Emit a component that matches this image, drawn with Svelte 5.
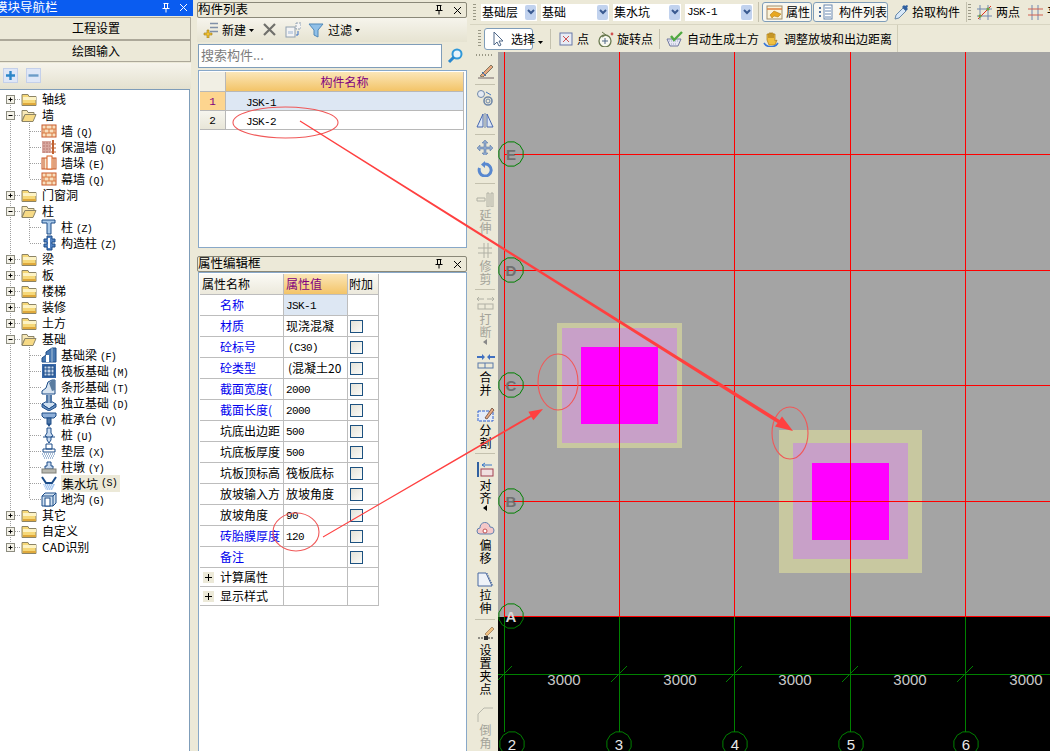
<script>
  const wallI = '<rect x="1" y="2" width="14" height="12" fill="#f8e0c0" stroke="#c8582a"/><path d="M1 6h14M1 10h14M5 2v4M11 2v4M3 6v4M8 6v4M13 6v4M5 10v4M11 10v4" stroke="#d87840" fill="none"/>';
  const icons = {
    closed: '<path d="M1 3.5h6l1 2h7v9H1z" fill="#f6d878" stroke="#8c8466"/><rect x="2" y="6" width="13" height="3" fill="#fdf3c4"/><rect x="2" y="12" width="13" height="2" fill="#dfa93c"/>',
    open: '<path d="M1 3.5h5l1 2h6v2H4L1 14z" fill="#f8e9b8" stroke="#8c8466"/><path d="M4 7.5h11l-3 7H1z" fill="#f7da85" stroke="#8c8466"/>',
    wall: wallI,
    insul: '<rect x="1" y="2" width="9" height="12" fill="#d8a8a0"/><path d="M2 4h7M2 7h7M2 10h7M2 13h7" stroke="#b87870" stroke-dasharray="2 1"/><rect x="11" y="1" width="2" height="14" fill="#c06030"/><path d="M10 5h5M10 9h5M10 13h5" stroke="#c06030"/>',
    pier: '<rect x="1" y="3" width="14" height="11" fill="#f8e8d0" stroke="#c8582a"/><rect x="6" y="1" width="5" height="13" fill="#fff" stroke="#d86020"/><path d="M3 3v11M13 3v11" stroke="#c8582a"/>',
    col: '<path d="M1 1h13v3h-4v11H6V4H1z" fill="#a8c8e8" stroke="#1c4c88"/>',
    ccol: '<path d="M6 1h5v3h3v3h-3v2h3v3h-3v3H6v-3H3V9h3V7H3V4h3z" fill="#5080c0" stroke="#1c4c88"/><rect x="7" y="3" width="2" height="10" fill="#fff"/>',
    fbeam: '<path d="M1 15v-4l4-3V5l6-4h4v14z" fill="#4878b0" stroke="#1c4c88"/><path d="M5 15V8h3v7z" fill="#fff"/><path d="M11 1v14" stroke="#a8c0d8"/>',
    raft: '<rect x="1" y="1" width="14" height="14" fill="#3868a8"/><path d="M3 3h10v10H3zM6 3v10M10 3v10M3 6h10M3 10h10" fill="#c8d8ec" stroke="#1c4c88"/>',
    strip: '<path d="M1 15v-3l4-3 2-6 4-2h3v14z" fill="#d8e4f0" stroke="#1c4c88"/><path d="M8 4l3-3h3v10l-3 1z" fill="#5a7ca0"/>',
    iso: '<path d="M1 9l7-4 7 4-7 5z" fill="#d0e0f0" stroke="#1c4c88"/><path d="M1 9v3l7 4 7-4V9l-7 5z" fill="#6890c0" stroke="#1c4c88"/><rect x="5" y="0" width="6" height="8" fill="#5078a8"/><path d="M8 0v8" stroke="#c8d8e8"/>',
    cap: '<path d="M1 2h14v3l-2 2H3L1 5z" fill="#90b0d8" stroke="#1c4c88"/><rect x="6" y="7" width="4" height="6" fill="#5078a8" stroke="#1c4c88"/><path d="M6 13l2 3 2-3z" fill="#1c4c88"/>',
    pile: '<path d="M6 1h4v5l2 3-2 1 0 3-2 3-2-3v-3L4 9l2-3z" fill="#c8daf0" stroke="#1c4c88"/><path d="M2 10h12" stroke="#1c4c88"/>',
    pad: '<path d="M5 1h6v5H5zM2 6h12v3H2z" fill="#fff" stroke="#1c4c88"/><path d="M1 11h14M2 13h12M3 15h10" stroke="#4878b0" stroke-dasharray="1 1"/>',
    pier2: '<path d="M6 3h4v4h2v3H4V7h2z" fill="#c8daf0" stroke="#1c4c88"/><rect x="1" y="10" width="14" height="4" fill="#b8b8b0" stroke="#808078"/>',
    pit: '<path d="M1 2l4 6h6l4-6" fill="none" stroke="#1c4c88" stroke-width="2"/><path d="M2 9h12l-3 6H5z" fill="#a8c8f0"/><path d="M3 10h10M4 12h8M5 14h6" stroke="#fff" stroke-dasharray="1 1"/>',
    trench: '<path d="M1 5l3-3h11v10l-3 3H1z" fill="#d0e0f0" stroke="#1c4c88"/><path d="M1 5h11v10M12 5l3-3" fill="none" stroke="#1c4c88"/><rect x="4" y="7" width="5" height="8" fill="#fff" stroke="#1c4c88"/>',
    newb: '<path d="M2 11h3V8h2v3h3v2H7v3H5v-3H2z" fill="#f0c030" stroke="#a07818" stroke-width=".6"/><path d="M8 1.5h8M8 5.5h8M8 9.5h8" stroke="#8090a8" stroke-width="1.6"/>',
    del: '<path d="M2 2l11 11M13 2L2 13" stroke="#70706c" stroke-width="2.2"/>',
    copy: '<rect x="1" y="5" width="9" height="10" fill="#f4f4f4" stroke="#90a0b0"/><rect x="3" y="9" width="5" height="3" fill="#c8d4e4"/><rect x="11" y="1" width="5" height="6" fill="#f4f4f4" stroke="#90a0b0" stroke-dasharray="2 1"/><path d="M13 9v4h-2" stroke="#3870c8" fill="none"/>',
    funnel: '<path d="M1 2h14l-5 6v7l-4-2V8z" fill="#90c0e8" stroke="#5088b8"/>',
    search: '<circle cx="10" cy="6" r="4.5" fill="#e8f4fc" stroke="#3098d8" stroke-width="2"/><path d="M7 9l-5 5" stroke="#2888d0" stroke-width="3"/>',
    prop: '<rect x="1" y="2" width="15" height="13" fill="#fbf3d8" stroke="#a09070"/><path d="M1 5h15" stroke="#e08040" stroke-width="1.5"/><path d="M4 11l4-4 7 3-3 3-4-1-2 2z" fill="#e8a820" stroke="#a87010" stroke-width=".5"/>',
    list: '<path d="M2 3h2v2H2zM2 7h2v2H2zM2 11h2v2H2z" fill="#5070a0"/><rect x="7" y="1" width="8" height="14" fill="#fff" stroke="#6888b0"/><path d="M8 4h6M8 7h6M8 10h6M8 13h6" stroke="#6888b0"/>',
    pick: '<path d="M2 15l1-4 7-7 3 3-7 7z" fill="#d8e8f8" stroke="#6888a8"/><path d="M9 3l2-2 1 1 2-1 1 1-1 2 1 1-2 2z" fill="#3060a0"/>',
    two: '<path d="M4 1v15M12 1v15M1 5h15M1 12h15" stroke="#7088b0"/><path d="M2 15L15 2" stroke="#e03020"/><circle cx="4" cy="12" r="1.6" fill="#70a040"/><circle cx="12" cy="5" r="1.6" fill="#70a040"/>',
    grid: '<path d="M5 1v15M11 1v15" stroke="#7088b0"/><path d="M1 5h15M1 11h15" stroke="#d06050"/>',
    arrowc: '<path d="M4 1v13l3-3 2 4 2-1-2-4h4z" fill="#fff" stroke="#506888"/>',
    pt: '<rect x="1" y="2" width="12" height="12" fill="#e8ecf4" stroke="#6878a8"/><path d="M4 5l6 6M10 5l-6 6" stroke="#d05050"/>',
    rot: '<circle cx="8" cy="10" r="6" fill="#f8f8f0" stroke="#6a7a50" stroke-width="1.3"/><path d="M8 7v6M5 10h6" stroke="#506888"/><path d="M5 1l4 3-4 2" fill="none" stroke="#6a7a50"/><circle cx="15" cy="3" r="1.4" fill="#d05050"/>',
    auto: '<path d="M1 8h14l-3 7H4z" fill="#e8e8f4" stroke="#7078a0"/><path d="M3 10h10M5 13h6" stroke="#a0a8c8" stroke-dasharray="1 1"/><path d="M5 5l3 4 8-8" fill="none" stroke="#50a840" stroke-width="2.4"/>',
    hand: '<path d="M4 9V3h2v4-5h2v5-5h2v5-4h2v7l2-1-2 5H6z" fill="#f0c040" stroke="#a87818" stroke-width=".7"/><path d="M1 12c3 5 11 5 14 0" fill="none" stroke="#3878d8" stroke-width="1.6"/>',
    brush: '<path d="M4 13L15 2l2 2L7 14z" fill="#e8a880" stroke="#807860"/><path d="M2 15h16" stroke="#b0a8a0" stroke-width="2"/><path d="M6 9l4 4" stroke="#3870c0"/>',
    offs: '<circle cx="5" cy="4" r="3.5" fill="#e4eaf4" stroke="#7088a8"/><circle cx="12" cy="11" r="4" fill="none" stroke="#7088a8" stroke-width="1.6"/><circle cx="12" cy="11" r="2" fill="none" stroke="#7088a8"/><path d="M10 2l5 3" stroke="#4878c0"/>',
    mirror: '<path d="M7 2v13H1zM11 2v13h6z" fill="#dce6f4" stroke="#4868b0"/><path d="M9 1v15" stroke="#7088a8"/>',
    move: '<path d="M9 1l3 3h-2v4h4V6l3 3-3 3v-2h-4v4h2l-3 3-3-3h2v-4H4v2L1 9l3-3v2h4V4H6z" fill="#8ea8cc" stroke="#5070a0" stroke-width=".5"/>',
    rotate: '<path d="M9 3a6 6 0 1 1-5.5 4" fill="none" stroke="#5888d0" stroke-width="3"/><path d="M9 0v7L5 3.5z" fill="#5888d0"/>',
    extend: '<path d="M1 7h8v3H1zM11 2h2v14h-2zM15 2h2v14h-2z" fill="none" stroke="#b0b0a4"/>',
    trim: '<path d="M2 6h14M2 11h14M8 1v15M12 1v15" stroke="#b0b0a4"/>',
    brk: '<path d="M2 4h6M3 2L1 4l2 2M11 4h6M16 2l2 2-2 2" fill="none" stroke="#b0b0a4"/><rect x="2" y="9" width="15" height="5" fill="none" stroke="#b0b0a4"/><path d="M9 9v5" stroke="#b0b0a4"/>',
    merge: '<path d="M1 4h6M14 4h5" stroke="#4070c0" stroke-width="2"/><path d="M6 1l3 3-3 3zM14 1l-3 3 3 3z" fill="#4070c0"/><rect x="2" y="10" width="15" height="5" fill="none" stroke="#5878a8"/><path d="M9 10v5" stroke="#5878a8"/>',
    split: '<rect x="2" y="5" width="15" height="10" fill="#e4ecf8" stroke="#3060d0" stroke-dasharray="3 1"/><path d="M9 12L16 2l2 2-7 9z" fill="#e8a880" stroke="#806050"/>',
    align: '<path d="M2 1v15" stroke="#3060a0" stroke-width="2"/><path d="M6 4h10M6 4l3-2M6 4l3 2" stroke="#3878c8" fill="none"/><rect x="5" y="8" width="12" height="7" fill="#f0e0e0" stroke="#a04050"/>',
    offset: '<path d="M4 13a3 3 0 0 1 0-6 5 5 0 0 1 10-1 3.5 3.5 0 0 1 1 7z" fill="#f4c8c8" stroke="#6080b0"/><circle cx="9" cy="10" r="2" fill="#fff" stroke="#c05050"/>',
    stretch: '<path d="M2 2h8l6 13H2z" fill="#eef2f8" stroke="#4868a0"/><path d="M11 2l6 13" stroke="#4868a0" stroke-dasharray="1 1"/>',
    grip: '<path d="M2 12h5M12 12h5" stroke="#303030" stroke-dasharray="2 1"/><rect x="8" y="10" width="4" height="4" fill="#303030"/><path d="M9 8L16 1l2 2-7 7z" fill="#f0c080" stroke="#806040" stroke-width=".6"/>',
    chamfer: '<path d="M2 16V8l6-6h9" fill="none" stroke="#b8b8ac"/>'
  };

  const tree = [
    { t: '轴线', k: 'closed' }, { t: '墙', k: 'open' },
    { t: '墙', h: '(Q)', i: 'wall' }, { t: '保温墙', h: '(Q)', i: 'insul' }, { t: '墙垛', h: '(E)', i: 'pier' }, { t: '幕墙', h: '(Q)', i: 'wall', last: true },
    { t: '门窗洞', k: 'closed' }, { t: '柱', k: 'open' },
    { t: '柱', h: '(Z)', i: 'col' }, { t: '构造柱', h: '(Z)', i: 'ccol', last: true },
    { t: '梁', k: 'closed' }, { t: '板', k: 'closed' }, { t: '楼梯', k: 'closed' }, { t: '装修', k: 'closed' }, { t: '土方', k: 'closed' }, { t: '基础', k: 'open' },
    { t: '基础梁', h: '(F)', i: 'fbeam' }, { t: '筏板基础', h: '(M)', i: 'raft' }, { t: '条形基础', h: '(T)', i: 'strip' }, { t: '独立基础', h: '(D)', i: 'iso' },
    { t: '桩承台', h: '(V)', i: 'cap' }, { t: '桩', h: '(U)', i: 'pile' }, { t: '垫层', h: '(X)', i: 'pad' }, { t: '柱墩', h: '(Y)', i: 'pier2' },
    { t: '集水坑', h: '(S)', i: 'pit', sel: true }, { t: '地沟', h: '(G)', i: 'trench', last: true },
    { t: '其它', k: 'closed' }, { t: '自定义', k: 'closed' }, { t: 'CAD识别', k: 'closed', end: true }
  ];

  const props = [
    { n: '名称', v: 'JSK-1', blue: true, lat: true, sel: true, nocheck: true },
    { n: '材质', v: '现浇混凝', blue: true },
    { n: '砼标号', v: '(C30)', blue: true, lat: true, ind: true },
    { n: '砼类型', v: '(混凝土20', blue: true, ind: true },
    { n: '截面宽度(', v: '2000', blue: true, lat: true },
    { n: '截面长度(', v: '2000', blue: true, lat: true },
    { n: '坑底出边距', v: '500', lat: true },
    { n: '坑底板厚度', v: '500', lat: true },
    { n: '坑板顶标高', v: '筏板底标' },
    { n: '放坡输入方', v: '放坡角度' },
    { n: '放坡角度', v: '90', lat: true },
    { n: '砖胎膜厚度', v: '120', blue: true, lat: true },
    { n: '备注', v: '', blue: true }
  ];

  const vtools = [
    { i: 'brush', mt: 7 }, { sep: 1, mt: 5 }, { i: 'offs', mt: 5 }, { i: 'mirror', mt: 6 }, { sep: 1, mt: 6 },
    { i: 'move', mt: 4 }, { i: 'rotate', mt: 6 }, { sep: 1, mt: 6 },
    { i: 'extend', t: '延伸', off: 1, mt: 7 }, { i: 'trim', t: '修剪', off: 1, mt: 7 }, { sep: 1, mt: 3 },
    { i: 'brk', t: '打断', off: 1, mt: 5, more: 1 }, { i: 'merge', t: '合并', mt: 8 }, { i: 'split', t: '分割', mt: 9 }, { sep: 1, mt: 3 },
    { i: 'align', t: '对齐', mt: 7, more: 1 }, { i: 'offset', t: '偏移', mt: 10 }, { i: 'stretch', t: '拉伸', mt: 6 }, { sep: 1, mt: 4 },
    { i: 'grip', t: '设置夹点', mt: 6 }, { i: 'chamfer', t: '倒角', off: 1, mt: 10 }
  ];

  const gx = [504, 619, 734, 850, 965];
  const gy = [154, 270, 385, 501, 616];
  const rows = [['E', 154], ['D', 270], ['C', 385], ['B', 501], ['A', 616]];
  const cols = [['2', 512], ['3', 619], ['4', 735], ['5', 851], ['6', 966]];
  const dims = [564, 680, 795, 910, 1026];
  const pits = [
    { x: 557, y: 323, w: 125, h: 125, px: 562, py: 328, pw: 115, ph: 115, mx: 581, my: 347 },
    { x: 779, y: 430, w: 143, h: 143, px: 793, py: 443, pw: 115, ph: 116, mx: 812, my: 463 }
  ];
  const gon = (cx, cy, r) =>
    Array.from({ length: 12 }, (_, i) => {
      const a = (i * Math.PI) / 6 + Math.PI / 12;
      return `${(cx + r * Math.cos(a)).toFixed(1)},${(cy + r * Math.sin(a)).toFixed(1)}`;
    }).join(' ');
</script>

{#snippet ic(name, w = 16, h = 16)}
  <svg class="ic" width={w} height={h} viewBox="0 0 {w} {h}">{@html icons[name]}</svg>
{/snippet}

{#snippet titlebar(text, cls)}
  <div class="title {cls}">
    <span class="title-text">{text}</span>
    <svg class="pin" width="12" height="12" viewBox="0 0 12 12"><path d="M3.5 1.5h5M4.5 1.5v5M7.5 1.5v5M2.5 6.5h7M6 6.5v4" fill="none" stroke="currentColor" /></svg>
    <svg class="close" width="11" height="11" viewBox="0 0 11 11"><path d="M2 2l7 7M9 2l-7 7" fill="none" stroke="currentColor" /></svg>
  </div>
{/snippet}

{#snippet drop()}
  <svg class="drop" width="5" height="3" viewBox="0 0 5 3"><path d="M0 0h5L2.5 3z" fill="#000" /></svg>
{/snippet}

<div class="app">
  <aside class="nav">
    {@render titlebar('模块导航栏', 'blue')}
    <button class="navbtn first">工程设置</button>
    <button class="navbtn">绘图输入</button>
    <div class="navtools">
      <span class="sq"><svg width="15" height="15" viewBox="0 0 15 15"><path d="M3 7.5h9M7.5 3v9" stroke="#2d86c8" stroke-width="2.4" /></svg></span>
      <span class="sq"><svg width="15" height="15" viewBox="0 0 15 15"><path d="M2.5 7.5h10" stroke="#6c9cc8" stroke-width="2.4" /></svg></span>
    </div>
    <div class="tree">
      {#each tree as r, idx}
        <div class="node">
          {#if r.k}
            <svg class="guide" width="21" height="16" viewBox="0 0 21 16">
              <path d="M10.5 {idx === 0 ? 8 : 0}V{r.end ? 8 : 16}M15 8.5H21" stroke="#a0a0a0" stroke-dasharray="1 1" fill="none" />
              <rect x="6.5" y="4.5" width="8" height="8" fill="#f4f2e8" stroke="#8c8c80" />
              <path d="M8.5 8.5h4" stroke="#000" />
              {#if r.k === 'closed'}<path d="M10.5 6.5v4" stroke="#000" />{/if}
            </svg>
            {@render ic(r.k)}
            <span class="lbl top">{r.t}</span>
          {:else}
            <svg class="guide" width="41" height="16" viewBox="0 0 41 16">
              <path d="M10.5 0V16M29.5 0V{r.last ? 8 : 16}M30 8.5H41" stroke="#a0a0a0" stroke-dasharray="1 1" fill="none" />
            </svg>
            {@render ic(r.i)}
            <span class="lbl" class:sel={r.sel}>{r.t}<span class="hk">{r.h}</span></span>
          {/if}
        </div>
      {/each}
    </div>
  </aside>

  <section class="mid">
    {@render titlebar('构件列表', '')}
    <div class="ltools">
      <span class="li new">{@render ic('newb')}<span>新建</span>{@render drop()}</span>
      <span class="li x">{@render ic('del')}</span>
      <span class="li cp">{@render ic('copy')}</span>
      <span class="li fl">{@render ic('funnel')}<span>过滤</span>{@render drop()}</span>
    </div>
    <div class="searchrow">
      <div class="search">搜索构件...</div>
      {@render ic('search')}
    </div>
    <div class="listbox">
      <div class="lrow head"><span class="num corner"></span><span class="cell hcell">构件名称</span></div>
      <div class="lrow"><span class="num active">1</span><span class="cell cur">JSK-1</span></div>
      <div class="lrow"><span class="num">2</span><span class="cell">JSK-2</span></div>
    </div>
    {@render titlebar('属性编辑框', 'second')}
    <div class="propbox">
      <div class="ptable">
        <div class="pc ph">属性名称</div><div class="pc ph orange">属性值</div><div class="pc ph add">附加</div>
        {#each props as p}
          <div class="pc pn" class:link={p.blue}>{p.n}</div>
          <div class="pc pv" class:lat={p.lat} class:ind={p.ind} class:cur={p.sel}>{p.v}</div>
          <div class="pc pk">{#if !p.nocheck}<span class="check"></span>{/if}</div>
        {/each}
        {#each ['计算属性', '显示样式'] as g}
          <div class="pc pg"><span class="plus"></span>{g}</div><div class="pc pgv"></div><div class="pc pgv"></div>
        {/each}
      </div>
    </div>
  </section>

  <main class="work">
    <div class="bar1">
      <span class="grip"></span>
      {#each [['基础层', 's1'], ['基础', 's2'], ['集水坑', 's2'], ['JSK-1', 's2 mono']] as [txt, c]}
        <span class="sel {c}"><span class="seltxt">{txt}</span>
          <span class="selarrow"><svg width="8" height="6" viewBox="0 0 8 6"><path d="M1 1l3 3 3-3" fill="none" stroke="#3a5a90" stroke-width="2" /></svg></span>
        </span>
      {/each}
      <span class="vsep a"></span>
      <span class="tbtn on prop">{@render ic('prop', 17, 16)}<span>属性</span></span>
      <span class="tbtn on listb">{@render ic('list')}<span>构件列表</span></span>
      <span class="tbtn pickb">{@render ic('pick')}<span>拾取构件</span></span>
      <span class="vsep b"></span>
      <span class="grip thin"></span>
      <span class="tbtn twob">{@render ic('two', 17, 17)}<span>两点</span></span>
      <span class="tbtn gridb">{@render ic('grid', 17, 17)}<span>平</span></span>
    </div>
    <div class="bar2">
      <span class="grip"></span>
      <span class="tbtn on selb">{@render ic('arrowc')}<span>选择</span></span>
      <span class="seldrop">{@render drop()}</span>
      <span class="vsep c"></span>
      <span class="tbtn ptb">{@render ic('pt', 14, 16)}<span>点</span></span>
      <span class="tbtn rotb">{@render ic('rot', 17, 16)}<span>旋转点</span></span>
      <span class="vsep d"></span>
      <span class="tbtn autob">{@render ic('auto', 17, 16)}<span>自动生成土方</span></span>
      <span class="tbtn handb">{@render ic('hand', 17, 16)}<span>调整放坡和出边距离</span></span>
    </div>
    <div class="workrow">
      <div class="vbar">
        <span class="vgrip"></span>
        {#each vtools as v}
          {#if v.sep}
            <span class="hsep" style="margin-top:{v.mt}px"></span>
          {:else}
            <span class="vt" class:off={v.off} style="margin-top:{v.mt}px">
              {@render ic(v.i, 19, 16)}
              {#if v.t}<span class="vtxt">{v.t}</span>{/if}
              {#if v.more}<svg width="4" height="6" viewBox="0 0 4 6"><path d="M4 0v6L0 3z" fill={v.off ? '#888' : '#000'} /></svg>{/if}
            </span>
          {/if}
        {/each}
      </div>
      <svg class="canvas" width="552" height="699" viewBox="498 52 552 699">
        <rect x="498" y="52" width="552" height="565" fill="#a4a4a4" />
        <rect x="498" y="617" width="552" height="134" fill="#000" />
        {#each pits as p}
          <rect x={p.x} y={p.y} width={p.w} height={p.h} fill="#c8c8a0" />
          <rect x={p.px} y={p.py} width={p.pw} height={p.ph} fill="#c8a0c8" />
          <rect x={p.mx} y={p.my} width="77" height="77" fill="#ff00ff" />
        {/each}
        <g shape-rendering="crispEdges" stroke-width="1">
          {#each gx as x}
            <line x1={x + 0.5} y1="52" x2={x + 0.5} y2="616" stroke="#ff0000" />
            <line x1={x + 0.5} y1="617" x2={x + 0.5} y2="732" stroke="#008000" />
          {/each}
          {#each gy as y}
            <line x1="504" y1={y + 0.5} x2="1050" y2={y + 0.5} stroke="#ff0000" />
          {/each}
          <line x1="498" y1="674.5" x2="1050" y2="674.5" stroke="#008000" />
        </g>
        {#each gx as x}
          <line x1={x - 8} y1="682" x2={x + 8} y2="666" stroke="#008000" />
        {/each}
        {#each rows as [l, y]}
          <polygon points={gon(511, y, 12.5)} fill="none" stroke="#008000" />
          <text class="axis" class:lt={l === 'A'} x="511" y={y + 6}>{l}</text>
        {/each}
        {#each cols as [l, x]}
          <polygon points={gon(x, 744, 12.5)} fill="none" stroke="#008000" />
          <text class="axis wt" {x} y="750">{l}</text>
        {/each}
        {#each dims as x}
          <text class="dim" {x} y="685">3000</text>
        {/each}
      </svg>
    </div>
  </main>

  <svg class="marks" width="1050" height="751" viewBox="0 0 1050 751">
    <g fill="none" stroke="#f05858" stroke-width="1.1">
      <ellipse cx="285.5" cy="122.5" rx="52.5" ry="15.5" />
      <ellipse cx="558" cy="382" rx="20" ry="28" />
      <ellipse cx="790" cy="433" rx="18" ry="26" />
      <ellipse cx="296" cy="532" rx="23" ry="19" />
    </g>
    <g fill="#ff4040">
      <polygon points="299.7,121.5 777.6,423 775,426.6 793,431 782,416.4 779.6,419.9 300.3,120.5" />
      <polygon points="323.2,537.4 531.3,416.9 533.4,420.3 543,409 528.4,411.7 530.5,415.2 322.8,536.6" />
    </g>
  </svg>
</div>

<style>
  :global(body) {
    margin: 0;
    background: #ece9d8;
  }
  .app {
    position: relative;
    display: grid;
    grid-template-columns: 191px 279px 552px 28px;
    width: 1050px;
    height: 751px;
    overflow: hidden;
    background: #ece9d8;
    font: 12px/16px "Noto Sans CJK SC", sans-serif;
    color: #000;
  }
  .ic { display: block; flex: none; }

  .title {
    display: flex;
    align-items: center;
    height: 14px;
    margin: 2px 3px 0 0;
    border: 1px solid #8a8878;
    border-radius: 2px;
    color: #000;
    font-size: 12.5px;
  }
  .title-text { flex: 1; white-space: nowrap; margin-top: -2px; }
  .pin { margin-right: 7px; }
  .close { margin-right: 3px; }
  .title.blue {
    margin: 0 -2px 0 0;
    height: 15px;
    padding-bottom: 1px;
    border: 0;
    border-radius: 0;
    background: #0a5cf0;
    color: #fff;
  }
  .blue .title-text { margin-left: -5px; }
  .blue .pin { margin-right: 6px; }
  .blue .close { margin-right: 4px; }
  .title.second { margin-top: 8px; }

  .navbtn {
    display: block;
    width: 191px;
    height: 22px;
    padding: 0 0 0 2px;
    margin: 0;
    border: 1px solid #aca899;
    border-width: 1px 1px 1px 0;
    background: #ece9d8;
    font: inherit;
    color: #000;
  }
  .navbtn.first { margin-top: 1px; height: 23px; padding-bottom: 2px; }
  .navtools {
    display: flex;
    gap: 8px;
    height: 26px;
    box-sizing: border-box;
    padding: 5px 0 0 3px;
    margin-top: 1px;
    background: linear-gradient(#f6f4ec, #e4e1cf);
  }
  .sq {
    display: block;
    width: 15px;
    height: 15px;
    background: #dfe7f7;
    box-shadow: inset 0 0 0 1px #c4d0ea;
  }
  .tree {
    height: 662px;
    box-sizing: border-box;
    margin-right: 1px;
    padding-top: 1px;
    background: #fff;
    border: 1px solid #7f9db9;
    border-left: 0;
    border-bottom: 0;
    overflow: hidden;
  }
  .node { display: flex; align-items: center; height: 16px; white-space: nowrap; }
  .guide { flex: none; display: block; }
  .lbl { height: 16px; line-height: 15px; margin-left: 2px; padding: 0 2px; }
  .lbl.top { margin-left: 3px; }
  .lbl.sel { background: #ece9d8; padding-right: 3px; }
  .hk { margin-left: 3px; font: 10px/15px "Liberation Mono", monospace; letter-spacing: -0.6px; }

  .mid { display: flex; flex-direction: column; padding-left: 6px; min-width: 0; }
  .ltools {
    display: flex;
    align-items: center;
    height: 24px;
    margin: 0 3px 0 0;
    padding-left: 5px;
    background: linear-gradient(#f6f4ec, #e6e3d1);
  }
  .li { display: flex; align-items: center; }
  .new span { margin-left: 4px; }
  .new :global(.drop), .fl :global(.drop) { margin-left: 3px; }
  .x { margin-left: 8px; }
  .cp { margin-left: 7px; }
  .fl { margin-left: 7px; }
  .fl span { margin-left: 4px; }
  .searchrow { display: flex; align-items: center; gap: 5px; height: 24px; margin: 2px 0 0 1px; }
  .search {
    width: 244px;
    height: 24px;
    box-sizing: border-box;
    border: 1px solid #7f9db9;
    background: #fff;
    padding-left: 2px;
    color: #7c7c7c;
    font-size: 13px;
    line-height: 19px;
  }
  .listbox {
    height: 178px;
    margin: 2px 3px 0 1px;
    padding: 1px 2px 0 1px;
    box-sizing: border-box;
    border: 1px solid #88a8c8;
    background: #fff;
  }
  .lrow { display: flex; height: 19px; }
  .lrow.head { height: 20px; }
  .num {
    width: 25px;
    border-right: 1px solid #b8b8b8;
    border-bottom: 1px solid #b8b8b8;
    background: linear-gradient(#f6f5ee, #e8e6d8);
    text-align: center;
    font: 11px/20px "Liberation Mono", monospace;
    color: #000;
  }
  .num.active { background: #fdd58f; color: #800080; }
  .num.corner { background: #f1efe4; }
  .cell {
    flex: 1;
    padding-left: 20px;
    border-right: 1px solid #b8b8b8;
    border-bottom: 1px solid #b8b8b8;
    font: 11px/23px "Liberation Mono", monospace;
    letter-spacing: -0.6px;
    overflow: hidden;
  }
  .cell.cur { background: #dde7f3; }
  .hcell {
    padding: 0;
    text-align: center;
    background: linear-gradient(#fbe6b8, #f3c468);
    color: #800080;
    letter-spacing: 0;
    font: 12px/20px "Noto Sans CJK SC", sans-serif;
  }
  .propbox {
    flex: 1;
    margin: 0 3px 0 1px;
    padding: 1px 0 0 1px;
    background: #fff;
    border: 1px solid #88a8c8;
    border-bottom: 0;
  }
  .ptable {
    display: grid;
    grid-template-columns: 84px 64px 31px;
    grid-template-rows: 21px repeat(13, 21px) 19px 19px;
    width: 179px;
  }
  .pc {
    box-sizing: border-box;
    border-right: 1px solid #bdbdbd;
    border-bottom: 1px solid #bdbdbd;
    white-space: nowrap;
    overflow: hidden;
    line-height: 20px;
  }
  .ph { padding-left: 2px; background: linear-gradient(#fbfaf5, #ece9dc); }
  .ph.orange { background: linear-gradient(#fbe6b8, #f3c468); color: #800080; }
  .ph.add { padding-left: 1px; }
  .pn { padding-left: 20px; }
  .pn.link { color: #0000ee; }
  .pv { padding-left: 2px; line-height: 19px; }
  .pv.lat { font: 11px/23px "Liberation Mono", monospace; letter-spacing: -0.6px; }
  .pv.ind { padding-left: 4px; }
  .pv.cur { background: #dde7f3; }
  .pk { padding: 4px 0 0 2px; }
  .check {
    display: block;
    width: 13px;
    height: 13px;
    box-sizing: border-box;
    border: 1px solid #1c5180;
    background: linear-gradient(135deg, #e4e2d8, #fbfbf8);
  }
  .pg { display: flex; align-items: center; padding-left: 3px; line-height: 18px; }
  .plus {
    width: 11px;
    height: 11px;
    margin-right: 6px;
    background:
      linear-gradient(#000, #000) center / 7px 1px no-repeat,
      linear-gradient(#000, #000) center / 1px 7px no-repeat,
      #ece9d8;
  }
  .work { grid-column: 3 / 5; display: flex; flex-direction: column; min-width: 0; }
  .bar1, .bar2 { display: flex; align-items: center; white-space: nowrap; overflow: hidden; flex: none; }
  .bar1 { height: 24px; padding-left: 3px; border-bottom: 1px solid #d8d5c2; }
  .bar2 { height: 27px; padding-left: 8px; width: 419px; border-right: 1px solid #d0cdb8; }
  .grip {
    flex: none;
    width: 3px;
    height: 17px;
    background: repeating-linear-gradient(#9a9886 0 1px, transparent 1px 3px);
  }
  .grip.thin { margin-left: 1px; }
  .sel {
    flex: none;
    display: flex;
    align-items: center;
    justify-content: space-between;
    height: 17px;
    margin-left: 4px;
    background: #fff;
    padding-left: 1px;
    box-sizing: border-box;
  }
  .s1 { width: 56px; margin-left: 5px; }
  .s2 { width: 68px; }
  .mono .seltxt { font: 11px/17px "Liberation Mono", monospace; letter-spacing: -0.6px; padding-left: 1px; }
  .selarrow {
    display: flex;
    align-items: center;
    justify-content: center;
    width: 11px;
    height: 15px;
    margin-right: 1px;
    background: #c1d2ee;
    border-radius: 2px;
  }
  .vsep { flex: none; width: 1px; height: 20px; background: #c4c1ae; }
  .vsep.a { margin-left: 5px; }
  .vsep.b { margin-left: 6px; }
  .vsep.c { margin-left: 6px; }
  .vsep.d { margin-left: 6px; }
  .tbtn { display: flex; align-items: center; flex: none; box-sizing: border-box; height: 20px; }
  .tbtn.on { background: #f8f7f0; border: 1px solid #7f9db9; border-radius: 3px; }
  .prop { width: 50px; margin-left: 3px; padding-left: 3px; gap: 3px; }
  .listb { width: 75px; margin-left: 1px; padding-left: 3px; gap: 6px; }
  .pickb { margin-left: 5px; gap: 3px; }
  .twob { margin-left: 5px; gap: 3px; }
  .gridb { margin-left: 7px; gap: 3px; }
  .selb { width: 49px; height: 22px; margin-left: 3px; padding-left: 5px; gap: 5px; background: #fff !important; }
  .seldrop { margin-left: 5px; width: 6px; }
  .ptb { margin-left: 8px; gap: 4px; }
  .rotb { margin-left: 8px; gap: 3px; }
  .autob { margin-left: 6px; gap: 4px; }
  .handb { margin-left: 4px; gap: 4px; }

  .workrow { display: flex; flex: 1; min-height: 0; }
  .vbar {
    flex: none;
    width: 26px;
    margin: 1px 0 0 2px;
    display: flex;
    flex-direction: column;
    align-items: center;
    overflow: hidden;
    height: 698px;
  }
  .vgrip {
    flex: none;
    width: 18px;
    height: 2px;
    margin-top: 1px;
    background: repeating-linear-gradient(90deg, #9a9886 0 1px, transparent 1px 3px);
  }
  .hsep { flex: none; width: 20px; height: 1px; background: #c4c1ae; }
  .vt { display: flex; flex-direction: column; align-items: center; flex: none; }
  .vt.off { color: #a4a49a; }
  .vtxt {
    writing-mode: vertical-rl;
    text-orientation: upright;
    letter-spacing: 1px;
    line-height: 14px;
    margin-top: 2px;
  }
  .canvas { display: block; flex: none; }
  .axis {
    font: bold 15px "Liberation Sans", sans-serif;
    text-anchor: middle;
    fill: #707070;
  }
  .axis.lt { fill: #d8d8d8; }
  .axis.wt { fill: #e8e8e8; font-weight: normal; }
  .dim {
    font: 15px "Liberation Sans", sans-serif;
    text-anchor: middle;
    fill: #c8c8c8;
  }
  .marks { position: absolute; left: 0; top: 0; pointer-events: none; }
</style>
